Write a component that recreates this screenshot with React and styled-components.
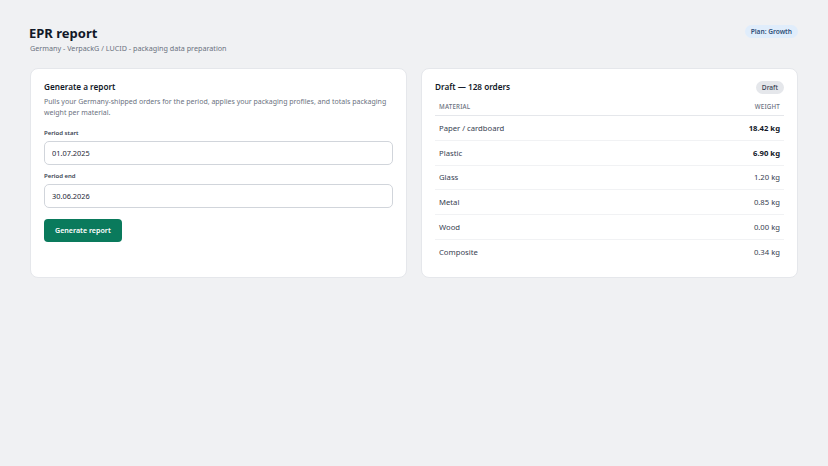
import React from "react";
import styled, { createGlobalStyle } from "styled-components";

const GlobalStyle = createGlobalStyle`
  html, body {
    margin: 0;
    padding: 0;
    background: #f0f1f3;
    font-family: "Noto Sans", "Open Sans", sans-serif;
    color: #111827;
  }
`;

const materials = [
  { name: "Paper / cardboard", weight: "18.42 kg", strong: true },
  { name: "Plastic", weight: "6.90 kg", strong: true },
  { name: "Glass", weight: "1.20 kg" },
  { name: "Metal", weight: "0.85 kg" },
  { name: "Wood", weight: "0.00 kg" },
  { name: "Composite", weight: "0.34 kg" },
];

const App = () => {
  return (
    <Page>
      <GlobalStyle />
      <Header>
        <div>
          <Title>EPR report</Title>
          <Subtitle>Germany - VerpackG / LUCID - packaging data preparation</Subtitle>
        </div>
        <PlanBadge>Plan: Growth</PlanBadge>
      </Header>

      <Columns>
        <Card>
          <CardTitle>Generate a report</CardTitle>
          <Description>
            Pulls your Germany-shipped orders for the period, applies your
            packaging profiles, and totals packaging weight per material.
          </Description>
          <Field>
            <Label>Period start</Label>
            <Input defaultValue="01.07.2025" />
          </Field>
          <Field>
            <Label>Period end</Label>
            <Input defaultValue="30.06.2026" />
          </Field>
          <Button>Generate report</Button>
        </Card>

        <Card>
          <CardHead>
            <CardTitle>Draft — 128 orders</CardTitle>
            <Pill>Draft</Pill>
          </CardHead>
          <Table>
            <thead>
              <tr>
                <Th>Material</Th>
                <Th align="right">Weight</Th>
              </tr>
            </thead>
            <tbody>
              {materials.map((m) => (
                <Row key={m.name}>
                  <Td>{m.name}</Td>
                  <Td align="right" $strong={m.strong}>
                    {m.weight}
                  </Td>
                </Row>
              ))}
            </tbody>
          </Table>
        </Card>
      </Columns>
    </Page>
  );
};
export default App;

const Page = styled.div`
  padding: 24.5px 30px;
`;

const Header = styled.div`
  display: flex;
  justify-content: space-between;
  align-items: flex-start;
  margin-bottom: 14px;
`;

const Title = styled.h1`
  margin: 0 0 0 -1px;
  font-size: 13px;
  line-height: 17px;
  font-weight: 700;
  color: #111827;
`;

const Subtitle = styled.p`
  margin: 1px 0 0;
  font-size: 7.2px;
  line-height: 11px;
  color: #6b7280;
`;

const PlanBadge = styled.span`
  margin-top: 0.5px;
  padding: 2px 6px;
  border-radius: 999px;
  background: #e0edfb;
  color: #2f4f79;
  font-size: 6.6px;
  line-height: 9px;
  font-weight: 600;
`;

const Columns = styled.div`
  display: grid;
  grid-template-columns: 1fr 1fr;
  gap: 14px;
`;

const Card = styled.section`
  background: #ffffff;
  border: 1px solid #e5e7eb;
  border-radius: 8px;
  padding: 12px 13px 13px;
`;

const CardHead = styled.div`
  display: flex;
  justify-content: space-between;
  align-items: center;
`;

const CardTitle = styled.h2`
  margin: 0;
  font-size: 8.2px;
  line-height: 12px;
  font-weight: 600;
  color: #111827;
`;

const Description = styled.p`
  margin: 3.5px 0 11px;
  font-size: 7px;
  line-height: 11px;
  color: #6b7280;
`;

const Field = styled.div`
  margin-bottom: 7.5px;
`;

const Label = styled.label`
  display: block;
  margin-bottom: 2.5px;
  font-size: 6px;
  line-height: 9px;
  font-weight: 600;
  color: #374151;
`;

const Input = styled.input`
  display: block;
  box-sizing: border-box;
  width: 100%;
  height: 24px;
  padding: 0 7px;
  border: 1px solid #d1d5db;
  border-radius: 5px;
  font-family: inherit;
  font-size: 7.4px;
  color: #1f2937;
  background: #fff;
  outline: none;
`;

const Button = styled.button`
  display: block;
  margin-top: 11px;
  height: 23px;
  padding: 0 11px;
  border: none;
  border-radius: 4px;
  background: #0a7a5c;
  color: #ffffff;
  font-family: inherit;
  font-size: 7.1px;
  font-weight: 600;
`;

const Pill = styled.span`
  padding: 2px 6px;
  border-radius: 999px;
  background: #e5e7eb;
  color: #374151;
  font-size: 6.6px;
  line-height: 9px;
  font-weight: 500;
`;

const Table = styled.table`
  width: 100%;
  margin-top: 3.5px;
  border-collapse: collapse;
`;

const Th = styled.th`
  padding: 5px 4px 4px;
  text-align: ${(p) => p.align || "left"};
  font-size: 6.2px;
  line-height: 9px;
  font-weight: 500;
  letter-spacing: 0.2px;
  text-transform: uppercase;
  color: #6b7280;
  border-bottom: 1px solid #e5e7eb;
`;

const Row = styled.tr`
  height: 24.8px;
  border-bottom: 1px solid #f1f2f4;
  &:last-child {
    border-bottom: none;
  }
`;

const Td = styled.td`
  padding: 0 4px;
  text-align: ${(p) => p.align || "left"};
  font-size: 7.7px;
  font-weight: ${(p) => (p.$strong ? 700 : 400)};
  color: ${(p) => (p.$strong ? "#111827" : "#374151")};
`;
